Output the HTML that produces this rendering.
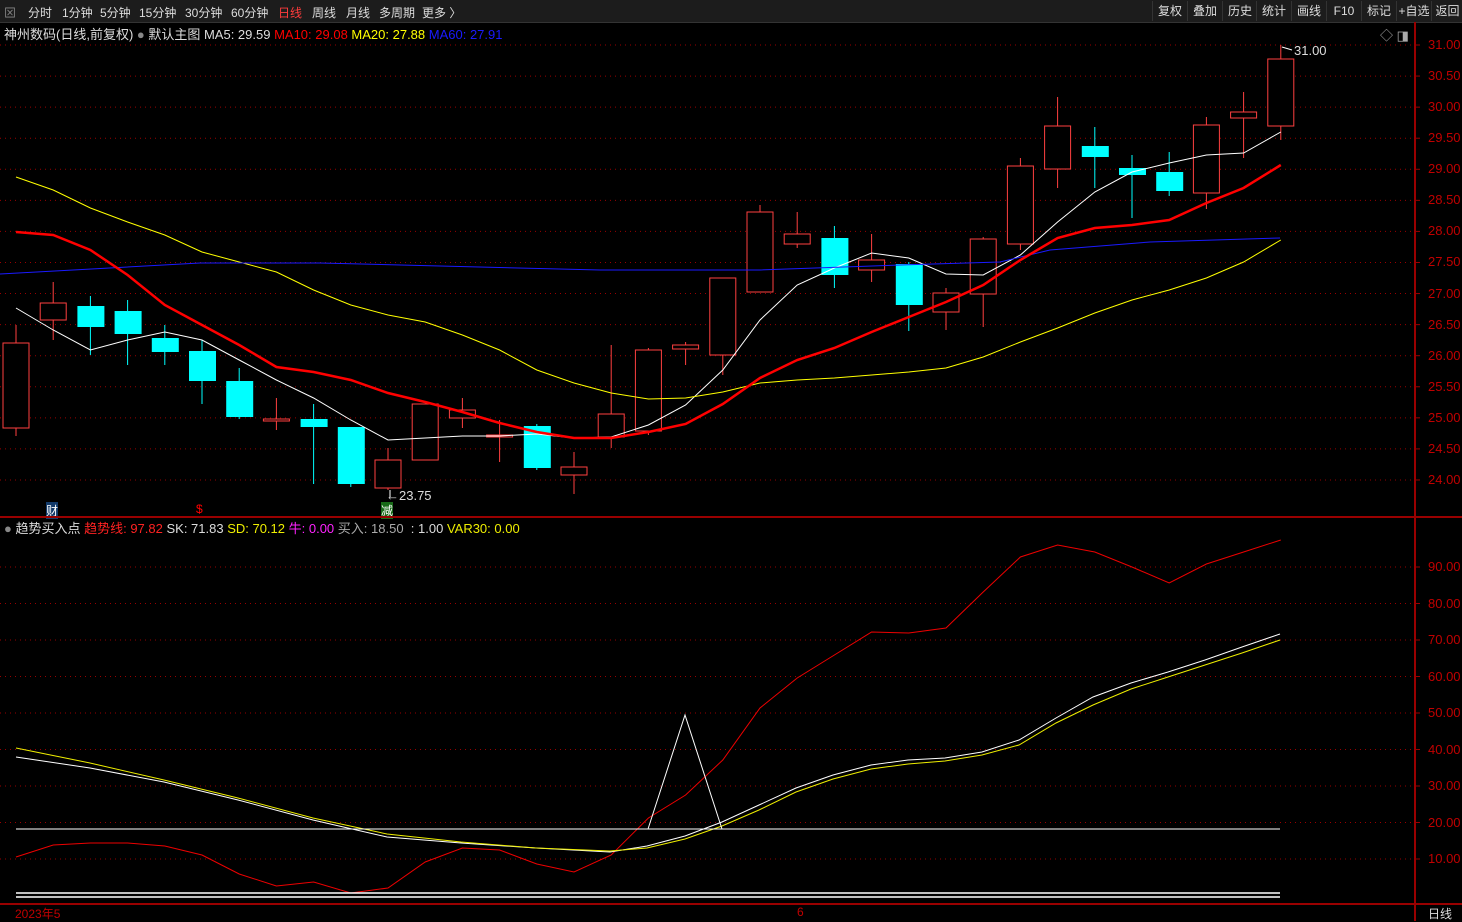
<!DOCTYPE html>
<html><head><meta charset="utf-8"><style>
body{margin:0;width:1462px;height:921px;background:#000;overflow:hidden;font-family:"Liberation Sans","Noto Sans CJK SC",sans-serif;font-size:12px;position:relative}
.top{position:absolute;left:0;top:0;width:1462px;height:22px;background:#1c1c1c;border-bottom:1px solid #333}
.t{position:absolute;top:4px;color:#ddd;font-size:12px;white-space:nowrap}
.btn{position:absolute;top:1px;height:20px;line-height:20px;color:#ddd;border-left:1px solid #333;text-align:center;font-size:12px}
.l{position:absolute;white-space:nowrap;font-size:13px}
.ax{position:absolute;left:1428px;color:#c00000;font-size:13px}
</style></head><body>
<div class="top">
<span class="t" style="left:4px;color:#888">⊠</span>
<span class="t" style="left:28px">分时</span><span class="t" style="left:62px">1分钟</span><span class="t" style="left:100px">5分钟</span><span class="t" style="left:139px">15分钟</span><span class="t" style="left:185px">30分钟</span><span class="t" style="left:231px">60分钟</span><span class="t" style="left:278px;color:#ff3c3c">日线</span><span class="t" style="left:312px">周线</span><span class="t" style="left:346px">月线</span><span class="t" style="left:379px">多周期</span><span class="t" style="left:422px">更多 〉</span>
<div class="btn" style="left:1152px;width:34px">复权</div><div class="btn" style="left:1187px;width:34px">叠加</div><div class="btn" style="left:1222px;width:34px">历史</div><div class="btn" style="left:1256px;width:34px">统计</div><div class="btn" style="left:1291px;width:34px">画线</div><div class="btn" style="left:1326px;width:34px">F10</div><div class="btn" style="left:1361px;width:34px">标记</div><div class="btn" style="left:1396px;width:34px">+自选</div><div class="btn" style="left:1431px;width:31px">返回</div>
</div>
<div class="l" style="left:4px;top:24px;color:#ddd">神州数码(日线,前复权) <span style="color:#888">●</span> 默认主图 MA5: 29.59 <span style="color:#f00">MA10: 29.08</span> <span style="color:#ff0">MA20: 27.88</span> <span style="color:#1a1aff">MA60: 27.91</span></div>
<div class="l" style="left:1380px;top:25px;color:#aaa">◇ ◨</div>
<div class="l" style="left:4px;top:518px;color:#ddd"><span style="color:#888">●</span> 趋势买入点 <span style="color:#f22">趋势线: 97.82</span> SK: 71.83 <span style="color:#ee0">SD: 70.12</span> <span style="color:#f2f">牛: 0.00</span> <span style="color:#aaa">买入: 18.50</span> &nbsp;: 1.00 <span style="color:#ee0">VAR30: 0.00</span></div>
<div class="l" style="left:1294px;top:43px;color:#ddd">31.00</div>
<div class="l" style="left:386px;top:488px;color:#ddd">←23.75</div>
<div class="l" style="left:46px;top:502px;color:#fff;background:#123a6a;font-size:12px">财</div>
<div class="l" style="left:196px;top:502px;color:#f00;font-size:12px">$</div>
<div class="l" style="left:381px;top:502px;color:#fff;background:#186a18;font-size:12px">减</div>
<div class="l" style="left:15px;top:905px;color:#c00000;font-size:12px">2023年5</div>
<div class="l" style="left:797px;top:905px;color:#c00000;font-size:12px">6</div>
<div class="l" style="left:1428px;top:905px;color:#ddd;font-size:12px">日线</div>
<div id="ax"></div>
<svg id="s" width="1462" height="921" style="position:absolute;left:0;top:0"></svg>
<script>
var s=document.getElementById('s'),h='',ax='';
function yp(p){return 45+(31-p)*62.14}
for(var p=24;p<=31.001;p+=0.5){var y=yp(p);h+='<line x1="0" x2="1412" y1="'+y+'" y2="'+y+'" stroke="#900" stroke-dasharray="1,4"/><line x1="1415" x2="1420" y1="'+y+'" y2="'+y+'" stroke="#900"/>';ax+='<div class="ax" style="top:'+(y-8)+'px">'+p.toFixed(2)+'</div>';}
for(var v=10;v<=90;v+=10){var y=567+(90-v)*3.65;h+='<line x1="0" x2="1412" y1="'+y+'" y2="'+y+'" stroke="#900" stroke-dasharray="1,4"/><line x1="1415" x2="1420" y1="'+y+'" y2="'+y+'" stroke="#900"/>';ax+='<div class="ax" style="top:'+(y-8)+'px">'+v.toFixed(2)+'</div>';}
document.getElementById('ax').innerHTML=ax;
h+='<line x1="1415" x2="1415" y1="22" y2="921" stroke="#900" stroke-width="2"/><line x1="0" x2="1462" y1="517" y2="517" stroke="#900" stroke-width="2"/><line x1="0" x2="1462" y1="904" y2="904" stroke="#900" stroke-width="2"/>';
var c=[['r',343,428,325,436],['r',303,320,282,340],['c',306,327,296,355],['c',311,334,300,365],['c',338,352,325,365],['c',351,381,340,404],['c',381,417,368,419],['r',419,421,398,430],['c',419,427,404,484],['c',427,484,427,487],['r',460,488,448,490],['r',404,460,404,460],['r',410,418,398,428],['r',435,437,420,462],['c',426,468,424,470],['r',467,475,452,494],['r',414,437,345,448],['r',350,431,348,435],['r',345,349,342,365],['r',278,355,278,375],['r',212,292,205,292],['r',234,244,212,248],['c',238,275,226,288],['r',260,270,234,282],['c',264,305,262,331],['r',293,312,288,330],['r',239,294,237,327],['r',166,244,158,250],['r',126,169,97,188],['c',146,157,127,188],['c',168,175,155,218],['c',172,191,152,196],['r',125,193,117,209],['r',112,118,92,158],['r',59,126,45,140]];
c.forEach(function(k,i){var x=16+i*37.2;var col=k[0]=='r'?'#ff4040':'#00ffff';
h+='<line x1="'+x+'" x2="'+x+'" y1="'+k[3]+'" y2="'+k[4]+'" stroke="'+col+'"/>';
if(k[0]=='r')h+='<rect x="'+(x-13)+'" y="'+k[1]+'" width="26" height="'+Math.max(1,k[2]-k[1])+'" fill="#000" stroke="'+col+'"/>';
else h+='<rect x="'+(x-13)+'" y="'+k[1]+'" width="27" height="'+(k[2]-k[1])+'" fill="'+col+'"/>';});
function L(ys,col,w){var pts=ys.map(function(y,i){return (16+i*37.2)+','+y}).join(' ');h+='<polyline points="'+pts+'" fill="none" stroke="'+col+'" stroke-width="'+(w||1)+'"/>';}
function P(pts,col,w){h+='<polyline points="'+pts+'" fill="none" stroke="'+col+'" stroke-width="'+(w||1)+'"/>';}
L([308,330,350,340,332,340,360,380,398,420,440,438,436,436,434,438,437,425,405,370,320,285,268,253,258,274,275,255,222,192,172,163,155,153,132],'#fff');
L([177,190,208,222,235,252,262,272,290,305,315,322,335,350,370,383,393,399,398,392,383,380,378,375,372,368,357,342,328,313,300,290,278,262,240],'#ff0');
P('0,274 200,263 320,263 600,270 760,270 900,265 1000,262 1050,250 1150,242 1280,238','#1a1aff');
L([232,235,250,275,305,325,345,367,372,380,393,402,412,423,432,438,438,432,424,404,378,360,348,332,317,302,285,260,238,228,225,220,203,188,165],'#f00',2.5);
L([857,845,843,843,846,855,874,886,882,893,888,862,848,850,864,872,855,818,795,760,708,678,655,632,633,628,592,557,545,552,567,583,564,552,540],'#e00');
P('16,757 90,768 164,782 238,800 313,820 387,837 461,843 536,848 610,852 647,846 685,836 722,822 759,805 796,788 833,775 871,765 908,760 945,758 982,752 1019,740 1056,718 1093,697 1131,683 1168,672 1205,660 1242,647 1280,634','#fff');
P('16,748 90,763 164,780 238,798 313,818 387,834 461,842 536,848 610,851 647,848 685,839 722,826 759,810 796,792 833,779 871,769 908,764 945,761 982,755 1019,745 1056,723 1093,705 1131,689 1168,677 1205,665 1242,653 1280,640','#ee0');
P('648,829 685,715 722,829','#fff');
h+='<line x1="16" x2="1280" y1="829" y2="829" stroke="#fff"/><line x1="16" x2="1280" y1="893" y2="893" stroke="#fff" stroke-width="1.5"/><line x1="16" x2="1280" y1="897" y2="897" stroke="#fff" stroke-width="1.5"/>';
h+='<line x1="1282" x2="1292" y1="47" y2="50" stroke="#fff"/><line x1="390" x2="390" y1="490" y2="497" stroke="#fff"/>';
s.innerHTML=h;
</script>
</body></html>
